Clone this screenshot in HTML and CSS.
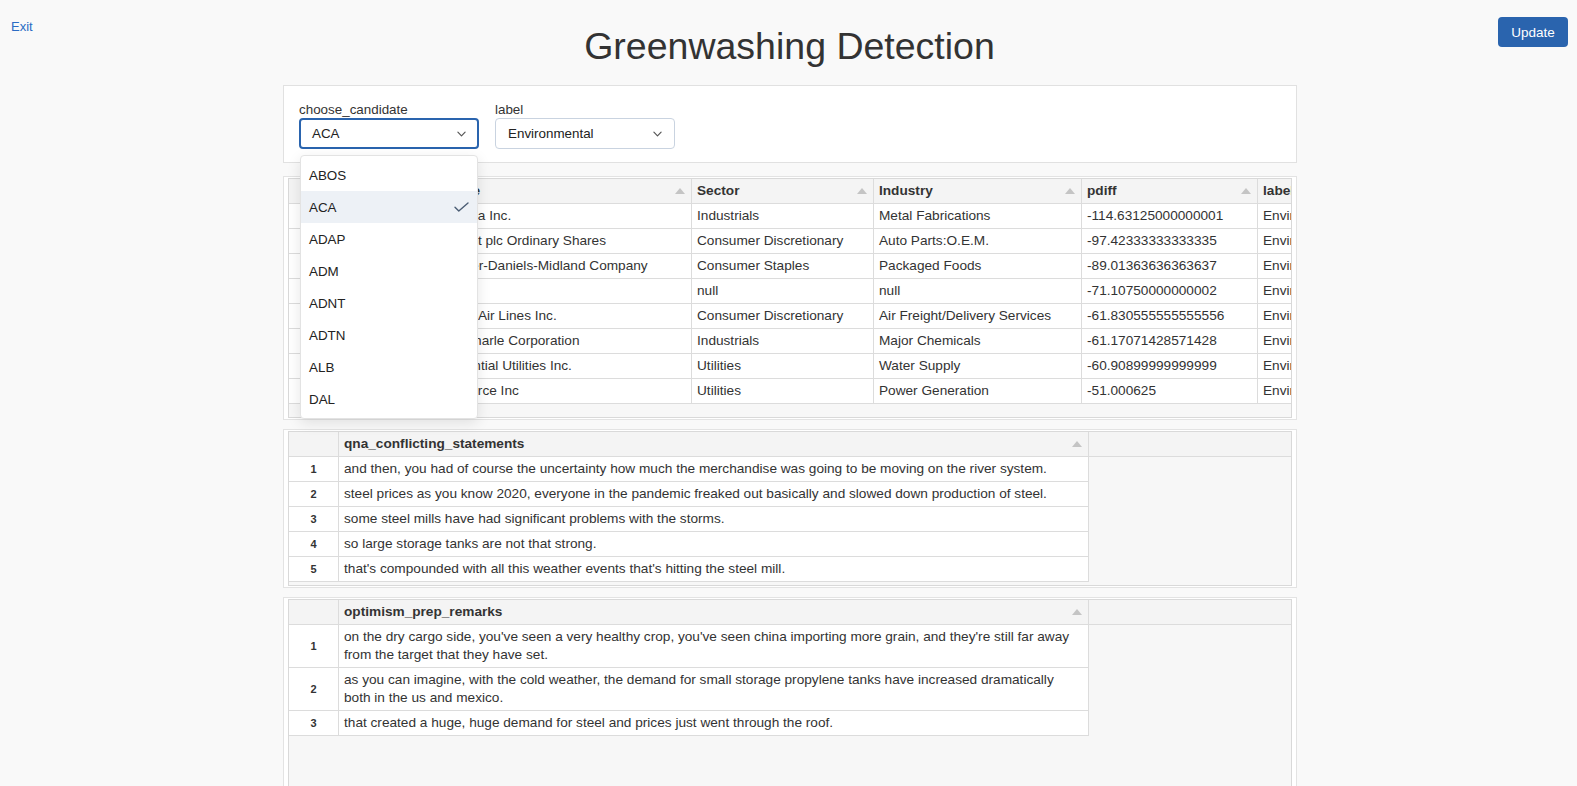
FILE: index.html
```html
<!DOCTYPE html>
<html lang="en">
<head>
<meta charset="utf-8">
<title>Greenwashing Detection</title>
<link rel="stylesheet" href="styles.css">
</head>
<body>
<header class="topbar">
  <a class="exit" href="#">Exit</a>
  <h1 class="title">Greenwashing Detection</h1>
  <button class="update" type="button">Update</button>
</header>

<div class="page">
<main class="content">
  <section class="filters">
    <div class="field">
      <span class="field-label">choose_candidate</span>
      <div class="select-wrap">
        <div class="select focused">
          <span>ACA</span>
          <svg class="chev" viewBox="0 0 10 6"><path d="M1 1 L5 5 L9 1" fill="none" stroke="#555" stroke-width="1.3" stroke-linecap="round" stroke-linejoin="round"/></svg>
        </div>
        <ul class="menu">
          <li>ABOS</li>
          <li class="active">ACA <svg class="check" viewBox="0 0 15 10"><path d="M1 5.2 L4.8 9 L14 1" fill="none" stroke="#4b5d74" stroke-width="1.4" stroke-linecap="round" stroke-linejoin="round"/></svg></li>
          <li>ADAP</li>
          <li>ADM</li>
          <li>ADNT</li>
          <li>ADTN</li>
          <li>ALB</li>
          <li>DAL</li>
        </ul>
      </div>
    </div>
    <div class="field">
      <span class="field-label">label</span>
      <div class="select-wrap">
        <div class="select">
          <span>Environmental</span>
          <svg class="chev" viewBox="0 0 10 6"><path d="M1 1 L5 5 L9 1" fill="none" stroke="#555" stroke-width="1.3" stroke-linecap="round" stroke-linejoin="round"/></svg>
        </div>
      </div>
    </div>
  </section>

  <section class="card card-first">
    <div class="grid grid-scroll">
      <table class="wide">
        <colgroup>
          <col class="c-idx"><col class="c-sym"><col class="c-name"><col class="c-sector"><col class="c-ind"><col class="c-pdiff"><col class="c-label">
        </colgroup>
        <thead>
          <tr>
            <th></th>
            <th><div class="th-inner"><span>Symbol</span><span class="sort"></span></div></th>
            <th><div class="th-inner"><span>Name</span><span class="sort"></span></div></th>
            <th><div class="th-inner"><span>Sector</span><span class="sort"></span></div></th>
            <th><div class="th-inner"><span>Industry</span><span class="sort"></span></div></th>
            <th><div class="th-inner"><span>pdiff</span><span class="sort"></span></div></th>
            <th><div class="th-inner"><span>label</span><span class="sort"></span></div></th>
          </tr>
        </thead>
        <tbody>
          <tr><td class="idx">1</td><td>ACA</td><td>Arcosa Inc.</td><td>Industrials</td><td>Metal Fabrications</td><td>-114.63125000000001</td><td>Environmental</td></tr>
          <tr><td class="idx">2</td><td>ADNT</td><td>Adient plc Ordinary Shares</td><td>Consumer Discretionary</td><td>Auto Parts:O.E.M.</td><td>-97.42333333333335</td><td>Environmental</td></tr>
          <tr><td class="idx">3</td><td>ADM</td><td>Archer-Daniels-Midland Company</td><td>Consumer Staples</td><td>Packaged Foods</td><td>-89.01363636363637</td><td>Environmental</td></tr>
          <tr><td class="idx">4</td><td>ABOS</td><td>null</td><td>null</td><td>null</td><td>-71.10750000000002</td><td>Environmental</td></tr>
          <tr><td class="idx">5</td><td>DAL</td><td>Delta Air Lines Inc.</td><td>Consumer Discretionary</td><td>Air Freight/Delivery Services</td><td>-61.830555555555556</td><td>Environmental</td></tr>
          <tr><td class="idx">6</td><td>ALB</td><td>Albemarle Corporation</td><td>Industrials</td><td>Major Chemicals</td><td>-61.17071428571428</td><td>Environmental</td></tr>
          <tr><td class="idx">7</td><td>WTRG</td><td>Essential Utilities Inc.</td><td>Utilities</td><td>Water Supply</td><td>-60.90899999999999</td><td>Environmental</td></tr>
          <tr><td class="idx">8</td><td>ADTN</td><td>Wsource Inc</td><td>Utilities</td><td>Power Generation</td><td>-51.000625</td><td>Environmental</td></tr>
        </tbody>
      </table>
    </div>
  </section>

  <section class="card">
    <div class="grid grid-short">
      <table class="text-table">
        <colgroup><col class="c-idx"><col class="c-text"><col></colgroup>
        <thead>
          <tr>
            <th></th>
            <th><div class="th-inner"><span>qna_conflicting_statements</span><span class="sort"></span></div></th>
            <th class="filler"></th>
          </tr>
        </thead>
        <tbody>
          <tr><td class="idx">1</td><td>and then, you had of course the uncertainty how much the merchandise was going to be moving on the river system.</td><td class="filler" rowspan="5"></td></tr>
          <tr><td class="idx">2</td><td>steel prices as you know 2020, everyone in the pandemic freaked out basically and slowed down production of steel.</td></tr>
          <tr><td class="idx">3</td><td>some steel mills have had significant problems with the storms.</td></tr>
          <tr><td class="idx">4</td><td>so large storage tanks are not that strong.</td></tr>
          <tr><td class="idx">5</td><td>that's compounded with all this weather events that's hitting the steel mill.</td></tr>
        </tbody>
      </table>
    </div>
  </section>

  <section class="card">
    <div class="grid grid-tall">
      <table class="text-table">
        <colgroup><col class="c-idx"><col class="c-text"><col></colgroup>
        <thead>
          <tr>
            <th></th>
            <th><div class="th-inner"><span>optimism_prep_remarks</span><span class="sort"></span></div></th>
            <th class="filler"></th>
          </tr>
        </thead>
        <tbody>
          <tr><td class="idx">1</td><td class="wrap">on the dry cargo side, you've seen a very healthy crop, you've seen china importing more grain, and they're still far away from the target that they have set.</td><td class="filler" rowspan="3"></td></tr>
          <tr><td class="idx">2</td><td class="wrap">as you can imagine, with the cold weather, the demand for small storage propylene tanks have increased dramatically both in the us and mexico.</td></tr>
          <tr><td class="idx">3</td><td class="wrap">that created a huge, huge demand for steel and prices just went through the roof.</td></tr>
        </tbody>
      </table>
    </div>
  </section>
</main>
</div>
</body>
</html>
```

FILE: styles.css
```css
* { box-sizing: border-box; }

html, body {
  margin: 0;
  height: 100%;
  overflow: hidden;
}

body {
  background: #f9f9f9;
  font-family: "Liberation Sans", Arial, Helvetica, sans-serif;
  color: #333;
}

.topbar {
  display: grid;
  grid-template-columns: 1fr auto 1fr;
  align-items: start;
  padding: 17px 9px 0 11px;
}

.exit {
  justify-self: start;
  margin-top: 2px;
  font-size: 13px;
  line-height: 16px;
  color: #2b6cc4;
  text-decoration: none;
}

.title {
  margin: 7px 0 0;
  font-size: 37.5px;
  line-height: 44px;
  font-weight: 400;
  color: #333;
}

.update {
  justify-self: end;
  width: 70px;
  height: 30px;
  padding: 0;
  border: 0;
  border-radius: 4px;
  background: #2a64ae;
  color: #fff;
  font-family: "Liberation Sans", Arial, sans-serif;
  font-size: 13.5px;
}

.page { padding-left: 3px; }

.content {
  width: 1014px;
  margin: 17px auto 0;
  display: flex;
  flex-direction: column;
}

.filters {
  background: #fff;
  border: 1px solid #e1e1e1;
  padding: 16px 15px 13px;
  display: flex;
  gap: 16px;
}

.field {
  display: flex;
  flex-direction: column;
  width: 180px;
}

.field-label {
  font-size: 13.4px;
  line-height: 16px;
  color: #333;
}

.select-wrap { position: relative; }

.select {
  height: 31px;
  display: flex;
  align-items: center;
  justify-content: space-between;
  padding: 0 12px;
  background: #fff;
  border: 1px solid #c9d3e0;
  border-radius: 4px;
  font-size: 13.4px;
  color: #222;
}

.select.focused {
  border: 2px solid #2a64ae;
  padding: 0 11px;
}

.chev { width: 9px; height: 6px; }

.menu {
  position: absolute;
  top: calc(100% + 6px);
  left: 1px;
  right: 1px;
  z-index: 10;
  list-style: none;
  margin: 0;
  padding: 3px 0;
  background: #fff;
  border: 1px solid #e3e3e3;
  border-radius: 4px;
  box-shadow: 0 4px 14px rgba(0, 0, 0, 0.10);
}

.menu li {
  height: 32px;
  display: flex;
  align-items: center;
  justify-content: space-between;
  padding: 0 8px;
  font-size: 13.4px;
  color: #222;
}

.menu li.active { background: #edf1f6; }

.check { width: 15px; height: 10px; }

.card {
  background: #fff;
  border: 1px solid #e3e3e3;
  padding: 1px 4px;
  margin-top: 9px;
}

.card-first { margin-top: 13px; }

.grid {
  border: 1px solid #d9d9d9;
  background: #f7f7f7;
  overflow: hidden;
}

.grid-scroll { padding-bottom: 13px; }
.grid-short { padding-bottom: 3px; }
.grid-tall { height: 300px; }

table {
  border-collapse: separate;
  border-spacing: 0;
  table-layout: fixed;
  font-size: 13.65px;
  color: #333;
}

table.wide { width: 1089px; }
table.text-table { width: 100%; }

.c-idx { width: 50px; }
.c-sym { width: 99px; }
.c-name { width: 254px; }
.c-sector { width: 182px; }
.c-ind { width: 208px; }
.c-pdiff { width: 176px; }
.c-label { width: 120px; }
.c-text { width: 750px; }

th, td {
  height: 25px;
  padding: 3px 5px;
  line-height: 18px;
  text-align: left;
  vertical-align: middle;
  white-space: nowrap;
  overflow: hidden;
  border-right: 1px solid #dcdcdc;
  border-bottom: 1px solid #dcdcdc;
}

th {
  background: #f4f4f4;
  font-weight: 700;
  color: #333;
  padding-right: 6px;
}

td { background: #fff; }

td.wrap { white-space: normal; }

td.idx {
  text-align: center;
  font-size: 11px;
  font-weight: 700;
}

th.filler { border-right: 0; }

td.filler {
  background: transparent;
  border: 0;
}

.th-inner {
  display: flex;
  align-items: center;
  justify-content: space-between;
}

.sort {
  width: 0;
  height: 0;
  border-left: 5.5px solid transparent;
  border-right: 5.5px solid transparent;
  border-bottom: 6px solid #c4c4c4;
  flex-shrink: 0;
}
```
